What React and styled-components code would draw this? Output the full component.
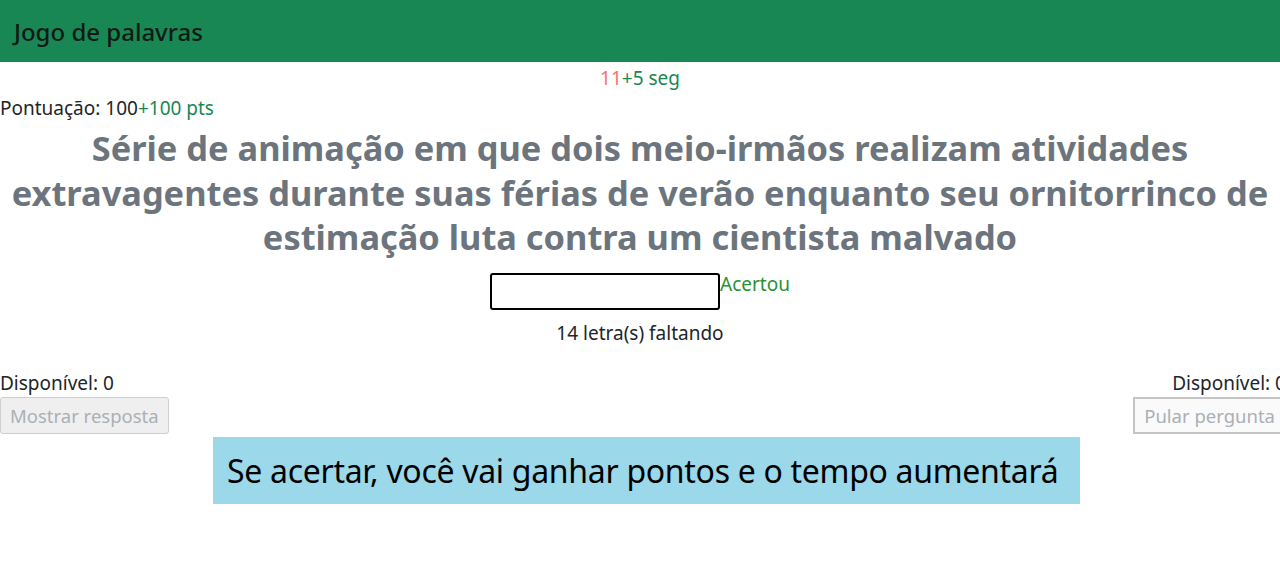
import styled, { createGlobalStyle } from "styled-components";

const GlobalStyle = createGlobalStyle`
  html, body {
    margin: 0;
    padding: 0;
    background: #fff;
    overflow: hidden;
  }
  body {
    font-family: "Noto Sans", "Open Sans", sans-serif;
    color: #212529;
    font-size: 19px;
  }
  * {
    box-sizing: border-box;
  }
`;

export default function App() {
  return (
    <>
      <GlobalStyle />
      <Header>
        <Brand>Jogo de palavras</Brand>
      </Header>
      <Main>
        <Timer>
          <Danger>11</Danger>
          <Success>+5 seg</Success>
        </Timer>
        <Score>
          Pontuação: 100<Success>+100 pts</Success>
        </Score>
        <Question>
          Série de animação em que dois meio-irmãos realizam atividades
          extravagentes durante suas férias de verão enquanto seu ornitorrinco
          de estimação luta contra um cientista malvado
        </Question>
        <AnswerRow>
          <AnswerInput type="text" />
          <Feedback>Acertou</Feedback>
        </AnswerRow>
        <Remaining>14 letra(s) faltando</Remaining>
        <Controls>
          <ControlGroup>
            <Available>Disponível: 0</Available>
            <ActionButton disabled>Mostrar resposta</ActionButton>
          </ControlGroup>
          <ControlGroup $right>
            <Available>Disponível: 0</Available>
            <ActionButton disabled $outlined>
              Pular pergunta
            </ActionButton>
          </ControlGroup>
        </Controls>
        <Banner>Se acertar, você vai ganhar pontos e o tempo aumentará</Banner>
      </Main>
    </>
  );
}

const Header = styled.header`
  display: flex;
  align-items: center;
  height: 62px;
  padding: 0 14px;
  background: #198754;
`;

const Brand = styled.h1`
  margin: 0;
  font-size: 24px;
  font-weight: 500;
  color: #0f1a14;
`;

const Main = styled.main`
  display: flex;
  flex-direction: column;
`;

const Danger = styled.span`
  color: #f4736b;
`;

const Success = styled.span`
  color: #198754;
`;

const Timer = styled.div`
  margin-top: 4px;
  line-height: 24px;
  text-align: center;
`;

const Score = styled.div`
  margin-top: 6px;
  line-height: 24px;
`;

const Question = styled.h2`
  margin: 6px 0 0;
  font-size: 34.4px;
  line-height: 44.5px;
  font-weight: 700;
  text-align: center;
  color: #6c757d;
`;

const AnswerRow = styled.div`
  display: flex;
  justify-content: center;
  align-items: flex-start;
  margin-top: 13px;
`;

const AnswerInput = styled.input`
  width: 230px;
  height: 37px;
  border: 2px solid #000;
  border-radius: 3px;
  background: #fff;
`;

const Feedback = styled.span`
  line-height: 22px;
  color: #2a9134;
`;

const Remaining = styled.div`
  margin-top: 11px;
  line-height: 24px;
  text-align: center;
`;

const Controls = styled.div`
  display: flex;
  justify-content: space-between;
  margin-top: 26px;
  margin-right: -6px;
`;

const ControlGroup = styled.div`
  display: flex;
  flex-direction: column;
  align-items: ${({ $right }) => ($right ? "flex-end" : "flex-start")};
`;

const Available = styled.div`
  line-height: 24px;
`;

const ActionButton = styled.button`
  margin-top: 2px;
  height: 37px;
  padding: 0 9px;
  font-family: inherit;
  font-size: 18.5px;
  color: #aab0b6;
  background: ${({ $outlined }) => ($outlined ? "#fafafa" : "#efefef")};
  border: ${({ $outlined }) =>
    $outlined ? "2px solid #c4c4c4" : "1px solid #cfcfcf"};
  border-radius: ${({ $outlined }) => ($outlined ? "0" : "3px")};
`;

const Banner = styled.div`
  display: flex;
  align-items: center;
  align-self: flex-start;
  width: 867px;
  height: 67px;
  margin: 3px 0 0 213px;
  padding-left: 14px;
  background: #9bd8ea;
  color: #000;
  font-size: 32px;
  letter-spacing: -0.3px;
`;
